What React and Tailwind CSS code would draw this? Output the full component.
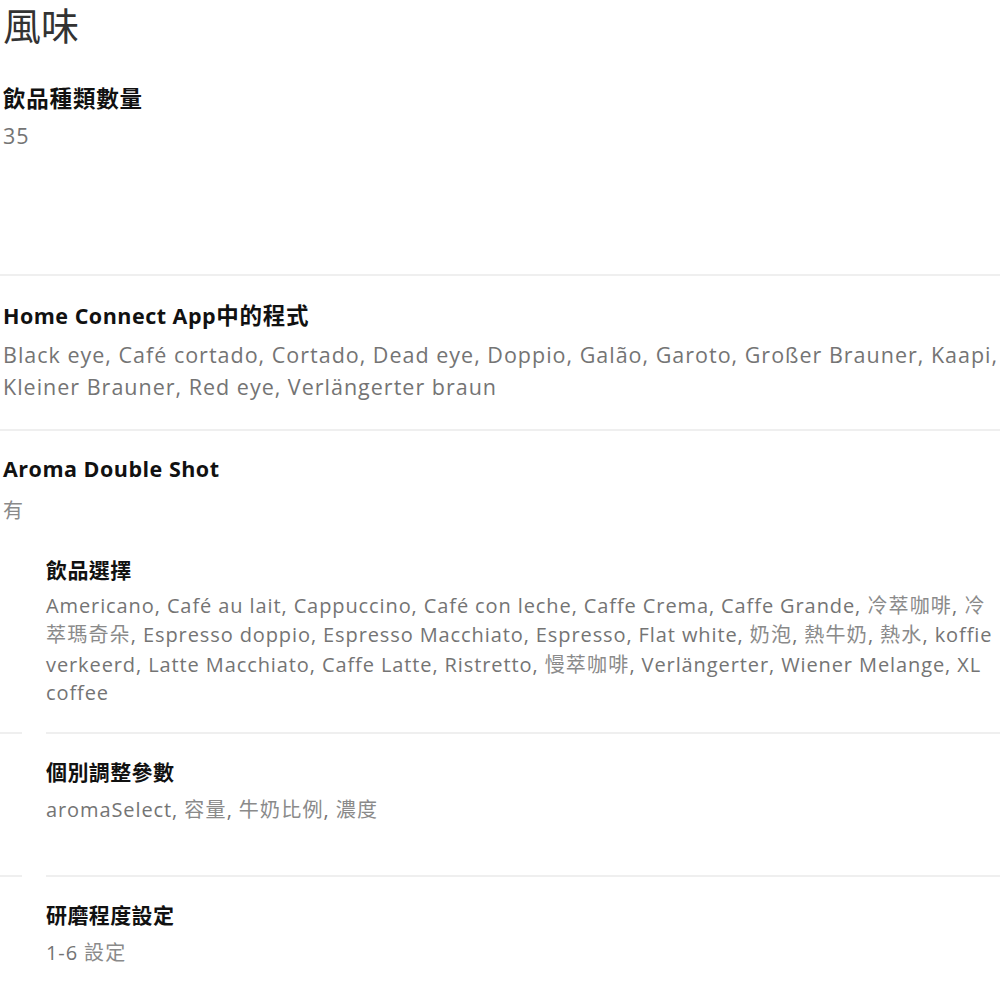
import React from "react";

const body = "font-['Open_Sans','Noto_Sans_CJK_TC',sans-serif]";
const CJK = /([\u3400-\u9fff]+)/;

function Line() {
  return <div className="h-[2px] bg-[#efefef]" />;
}

function SplitLine() {
  return (
    <div className="flex gap-6">
      <div className="h-[2px] w-[22px] bg-[#efefef]" />
      <div className="h-[2px] flex-1 bg-[#efefef]" />
    </div>
  );
}

function Mixed({ text, cjkClass }) {
  return text.split(CJK).map((part, i) =>
    CJK.test(part) ? (
      <span key={i} className={cjkClass}>
        {part}
      </span>
    ) : (
      <React.Fragment key={i}>{part}</React.Fragment>
    )
  );
}

function Heading({ children, nested = false, className = "" }) {
  const latin = nested
    ? "text-[20px] tracking-[0.4px]"
    : "text-[21.5px] tracking-[0.5px]";
  const cjk = nested
    ? "text-[21px] tracking-[0.4px] font-['Noto_Sans_CJK_TC',sans-serif]"
    : "text-[22.5px] tracking-[0.8px] font-['Noto_Sans_CJK_TC',sans-serif]";
  return (
    <div className={`h-[32px] leading-[32px] whitespace-nowrap font-bold text-[#111] ${latin} ${className}`}>
      <Mixed text={children} cjkClass={cjk} />
    </div>
  );
}

function Value({ lines, nested = false, lh = "h-[32px] leading-[32px]", className = "" }) {
  const latin = nested
    ? "text-[20px] tracking-[0.9px]"
    : "text-[21.5px] tracking-[1px]";
  const cjk = nested
    ? "text-[20px] tracking-[1.2px] text-[#8a8a8a] font-['Noto_Sans_CJK_TC',sans-serif]"
    : "text-[20px] tracking-[0.5px] text-[#8a8a8a] font-['Noto_Sans_CJK_TC',sans-serif]";
  return (
    <div className={`text-[#747474] ${latin} ${className}`}>
      {lines.map((l, i) => (
        <div key={i} className={`whitespace-nowrap ${lh}`}>
          <Mixed text={l} cjkClass={cjk} />
        </div>
      ))}
    </div>
  );
}

export default function App() {
  return (
    <div className={`w-[1000px] h-[1000px] bg-white overflow-hidden pl-[3px] ${body}`}>
      <div className="h-[48px] text-[38px] leading-[48px] text-[#333] font-['Noto_Sans_CJK_TC',sans-serif]">
        風味
      </div>

      <Heading className="mt-[33px]">飲品種類數量</Heading>
      <Value className="mt-[7px]" lines={["35"]} />

      <div className="mt-[122px] -ml-[3px]">
        <Line />
      </div>

      <Heading className="mt-[22px]">Home Connect App中的程式</Heading>
      <Value
        className="mt-[9px]"
        lines={[
          "Black eye, Café cortado, Cortado, Dead eye, Doppio, Galão, Garoto, Großer Brauner, Kaapi,",
          "Kleiner Brauner, Red eye, Verlängerter braun",
        ]}
      />

      <div className="mt-[26px] -ml-[3px]">
        <Line />
      </div>

      <Heading className="mt-[22px]">Aroma Double Shot</Heading>
      <Value className="mt-[9px]" lines={["有"]} />

      <div className="pl-[43px]">
        <Heading nested className="mt-[27px]">飲品選擇</Heading>
        <Value
          nested
          lh="h-[29.3px] leading-[29.3px]"
          className="mt-[5px]"
          lines={[
            "Americano, Café au lait, Cappuccino, Café con leche, Caffe Crema, Caffe Grande, 冷萃咖啡, 冷",
            "萃瑪奇朵, Espresso doppio, Espresso Macchiato, Espresso, Flat white, 奶泡, 熱牛奶, 熱水, koffie",
            "verkeerd, Latte Macchiato, Caffe Latte, Ristretto, 慢萃咖啡, Verlängerter, Wiener Melange, XL",
            "coffee",
          ]}
        />
      </div>

      <div className="mt-[25px] -ml-[3px]">
        <SplitLine />
      </div>

      <div className="pl-[43px]">
        <Heading nested className="mt-[21px]">個別調整參數</Heading>
        <Value nested className="mt-[6px]" lines={["aromaSelect, 容量, 牛奶比例, 濃度"]} />
      </div>

      <div className="mt-[50px] -ml-[3px]">
        <SplitLine />
      </div>

      <div className="pl-[43px]">
        <Heading nested className="mt-[21px]">研磨程度設定</Heading>
        <Value nested className="mt-[6px]" lines={["1-6 設定"]} />
      </div>
    </div>
  );
}
